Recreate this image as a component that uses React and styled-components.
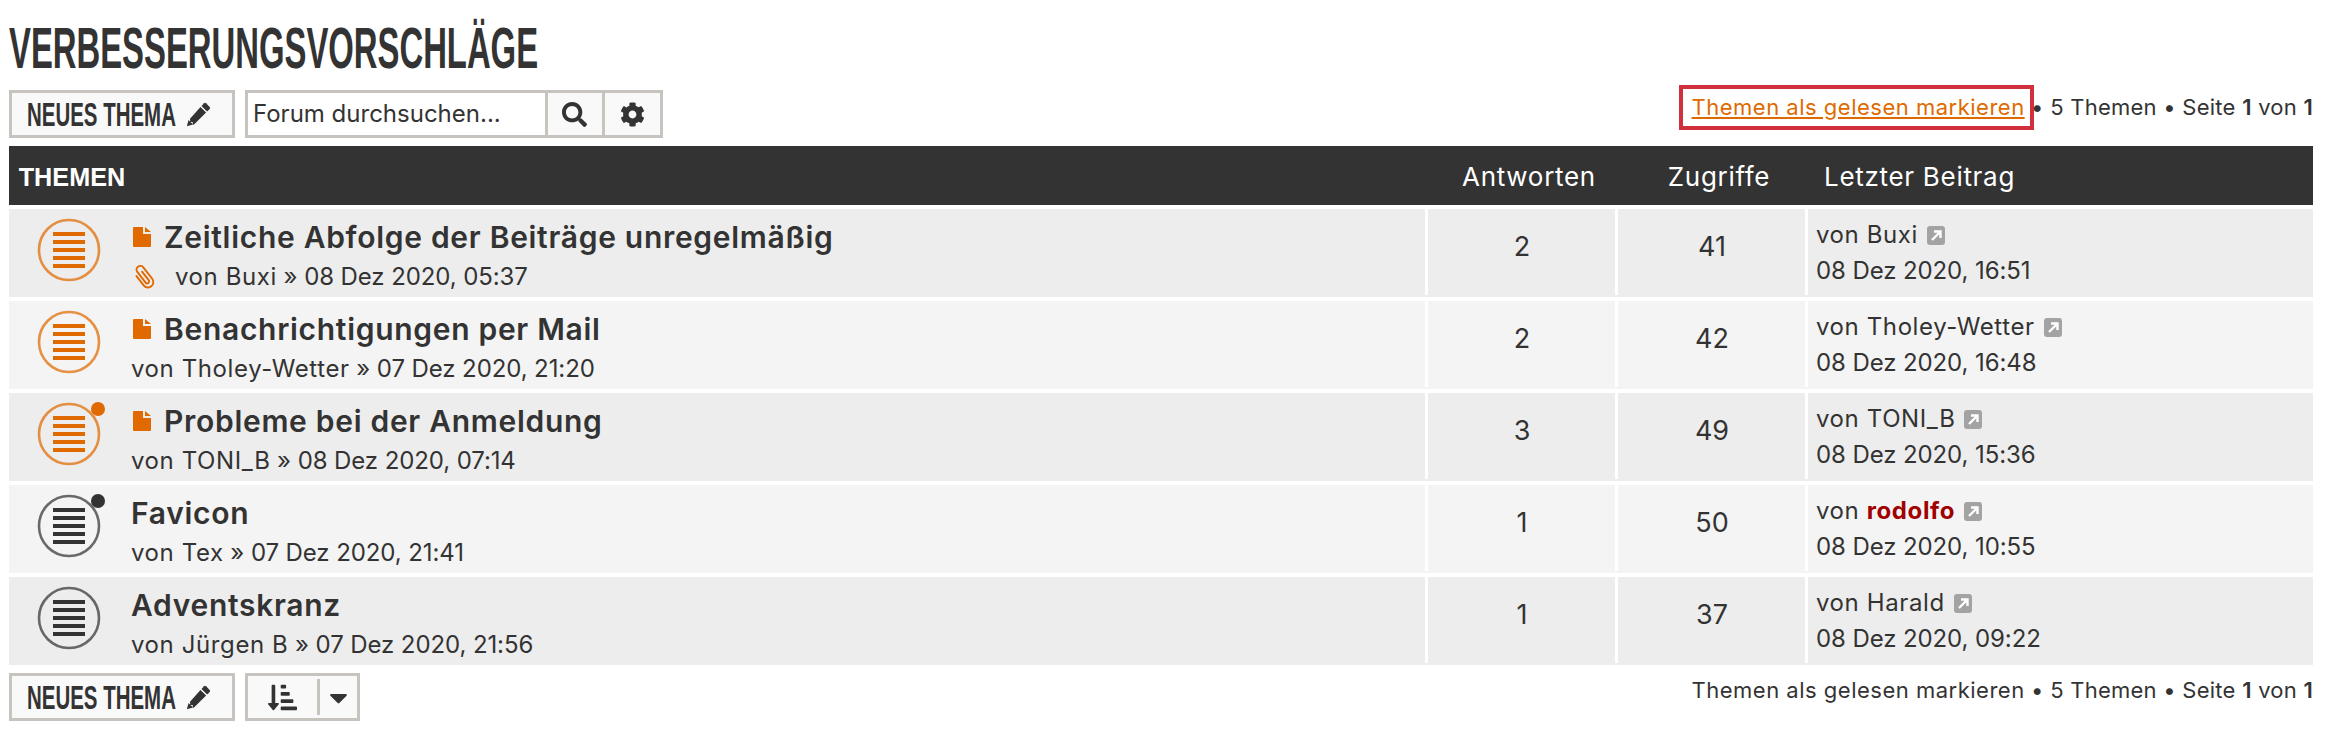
import React from "react";
import styled, { createGlobalStyle } from "styled-components";
import { FaSearch, FaCog, FaSortAmountDownAlt, FaCaretDown } from "react-icons/fa";

const GlobalStyle = createGlobalStyle`
  html, body { margin: 0; padding: 0; background: #fff; }
  body { font-family: Inter, "Open Sans", sans-serif; color: #333; }
`;

const Page = styled.div`
  padding: 0 30px 0 9px;
  height: 733px;
  overflow: hidden;
  box-sizing: border-box;
`;

const Heading = styled.h1`
  margin: 0;
  height: 90px;
  padding-top: 15px;
  box-sizing: border-box;
  font: 700 57px/66px "Liberation Sans", Arial, sans-serif;
  color: #333;
  white-space: nowrap;
  transform: scaleX(0.576);
  transform-origin: left top;
`;

const ActionBar = styled.div`
  display: flex;
  align-items: flex-start;
  justify-content: space-between;
  height: ${(p) => p.$height}px;
`;

const ActionGroup = styled.div`
  display: flex;
  gap: 10px;
`;

const Button = styled.button`
  width: 226px;
  height: 48px;
  box-sizing: border-box;
  border: 3px solid #c7c3be;
  background: #f9f9f9;
  color: #333;
  padding: 0 0 0 15px;
  display: flex;
  align-items: center;
`;

const ButtonLabel = styled.span`
  display: block;
  width: 159px;
  flex: none;
  font: 700 33px/1 "Liberation Sans", Arial, sans-serif;
  white-space: nowrap;
  transform: scaleX(0.62);
  transform-origin: left center;
`;

const SearchBox = styled.div`
  display: flex;
  width: 418px;
  height: 48px;
  box-sizing: border-box;
  border: 3px solid #c7c3be;
`;

const SearchText = styled.div`
  width: 298px;
  padding-left: 5px;
  box-sizing: border-box;
  background: #fff;
  font-size: 24px;
  line-height: 42px;
  color: #333;
`;

const SearchButton = styled.div`
  width: 55px;
  border-left: 3px solid #c7c3be;
  background: #f9f9f9;
  display: flex;
  align-items: center;
  justify-content: center;
  font-size: 25px;
  color: #333;
`;

const SortButton = styled.div`
  width: 115px;
  height: 48px;
  box-sizing: border-box;
  border: 3px solid #c7c3be;
  background: #f9f9f9;
  display: flex;
  align-items: center;
  color: #333;
`;

const SortPart = styled.div`
  display: flex;
  align-items: center;
  justify-content: center;
  height: 36px;
  font-size: 29px;
  width: ${(p) => p.$width}px;
  border-left: ${(p) => (p.$divided ? "3px solid #c7c3be" : "none")};
`;

const Pagination = styled.div`
  position: relative;
  font-size: 22px;
  line-height: 30px;
  letter-spacing: 0.25px;
  white-space: nowrap;
  margin-top: ${(p) => p.$top}px;
  color: #333;
  b { font-weight: 600; }
`;

const MarkLink = styled.a`
  color: #e06a00;
  letter-spacing: 0.5px;
  text-decoration: underline;
`;

const MarkText = styled.span`
  letter-spacing: 0.5px;
`;

// roter rahmen aus dem screenshot, liegt über dem link
const Highlight = styled.span`
  position: absolute;
  left: -13px;
  top: -7px;
  width: 355px;
  height: 45px;
  box-sizing: border-box;
  border: 4px solid #d0303c;
`;

const HeaderBar = styled.div`
  display: grid;
  grid-template-columns: 1417px 190px 190px 1fr;
  height: 59px;
  padding-top: 2px;
  box-sizing: border-box;
  background: #333;
  color: #fff;
  align-items: center;
  font-size: 26px;
  letter-spacing: 0.7px;
  margin-bottom: 4px;
`;

const HeaderTitle = styled.div`
  padding-left: 10px;
  font: 700 26px/1 "Liberation Sans", Arial, sans-serif;
  letter-spacing: 0;
  white-space: nowrap;
  transform: scaleX(0.97);
  transform-origin: left center;
`;

const HeaderCell = styled.div`
  text-align: ${(p) => p.$align || "center"};
  padding-left: ${(p) => p.$pad || 0}px;
  white-space: nowrap;
`;

const Rows = styled.div`
  display: flex;
  flex-direction: column;
  gap: 4px;
  margin-bottom: 8px;
`;

const Row = styled.div`
  display: grid;
  grid-template-columns: 1417px 190px 190px 1fr;
  height: 88px;
  background: ${(p) => (p.$even ? "#f4f4f4" : "#ededed")};
`;

const TopicCell = styled.div`
  display: flex;
  height: 86px;
`;

const StatusWrap = styled.div`
  position: relative;
  width: 122px;
  flex: none;
`;

const StatusSvg = styled.svg`
  position: absolute;
  left: 28px;
  top: 9px;
  width: 64px;
  height: 64px;
  overflow: visible;
`;

const TopicText = styled.div`
  padding-top: 4px;
  min-width: 0;
`;

const TitleLine = styled.div`
  display: flex;
  align-items: center;
  gap: 13px;
  height: 48px;
`;

const PageSvg = styled.svg`
  margin-left: 2px;
`;

const Title = styled.a`
  font-size: 30px;
  font-weight: 600;
  letter-spacing: 0.7px;
  color: #333;
  text-decoration: none;
  white-space: nowrap;
`;

const Meta = styled.div`
  display: flex;
  align-items: center;
  gap: 18px;
  font-size: 24px;
  line-height: 32px;
  white-space: nowrap;
  color: #333;
`;

const Who = styled.span`
  letter-spacing: 0.6px;
`;

const When = styled.span`
  letter-spacing: -0.1px;
`;

const CountCell = styled.div`
  height: 86px;
  padding-bottom: 12px;
  box-sizing: border-box;
  border-left: 3px solid #fff;
  margin-left: -1px;
  display: flex;
  align-items: center;
  justify-content: center;
  font-size: 27px;
`;

const LastCell = styled.div`
  height: 86px;
  border-left: 3px solid #fff;
  margin-left: -1px;
  box-sizing: border-box;
  padding: 8px 0 0 8px;
  font-size: 24px;
  line-height: 36px;
  white-space: nowrap;
`;

const Author = styled.b`
  color: #a00000;
  font-weight: 700;
`;

const LinkSvg = styled.svg`
  margin-left: 9px;
  vertical-align: -2px;
`;

const ClipSvg = styled.svg`
  flex: none;
`;

const StatusIcon = ({ color, dot }) => (
  <StatusSvg viewBox="0 0 64 64">
    <circle cx="32" cy="32" r="30" fill="none" stroke={color} strokeWidth="2.6" opacity="0.72" />
    {[16, 24, 32, 40, 48].map((y) => (
      <rect key={y} x="16" y={y - 2} width="32" height="4" fill={color} />
    ))}
    {dot && <circle cx="61" cy="7" r="7" fill={color} />}
  </StatusSvg>
);

const PageIcon = () => (
  <PageSvg width="18" height="20" viewBox="0 0 18 20">
    <path d="M0 1a1 1 0 0 1 1-1h9v7h8v12a1 1 0 0 1-1 1H1a1 1 0 0 1-1-1z" fill="#e06a00" />
    <path d="M12 0l6 5h-6z" fill="#e06a00" />
  </PageSvg>
);

const ClipIcon = () => (
  <ClipSvg width="26" height="28" viewBox="0 0 24 26">
    <g transform="rotate(-38 12 13)" fill="none" stroke="#e06a00" strokeWidth="1.8" strokeLinecap="round">
      <path d="M7 8v11a5 5 0 0 0 10 0V5.5a3.5 3.5 0 0 0-7 0V18a1.8 1.8 0 0 0 3.6 0V8" />
    </g>
  </ClipSvg>
);

const PencilIcon = () => (
  <svg width="25" height="25" viewBox="0 0 29 29" fill="#333">
    <path d="M21 1.5a1.6 1.6 0 0 1 2.2 0l4.3 4.3a1.6 1.6 0 0 1 0 2.2l-3 3-6.5-6.5z" />
    <path d="M16.8 5.7l6.5 6.5L9 26.5l-1.2-.3v-3h-3v-3l-.4-.4z" />
    <path d="M2.9 20.9l5.2 5.2L1 28z" />
  </svg>
);

const LinkIcon = () => (
  <LinkSvg width="18" height="19" viewBox="0 0 18 19">
    <rect width="18" height="19" rx="3" fill="#a3a3a3" />
    <path d="M5 14l7-7M7 5.5h6.5V12" fill="none" stroke="#fff" strokeWidth="2.4" />
  </LinkSvg>
);

const NewTopic = () => (
  <Button>
    <ButtonLabel>NEUES THEMA</ButtonLabel>
    <PencilIcon />
  </Button>
);

const topics = [
  { title: "Zeitliche Abfolge der Beiträge unregelmäßig", who: "von Buxi", when: " » 08 Dez 2020, 05:37", replies: 2, views: 41, last: "Buxi", date: "08 Dez 2020, 16:51", hot: true, clip: true },
  { title: "Benachrichtigungen per Mail", who: "von Tholey-Wetter", when: " » 07 Dez 2020, 21:20", replies: 2, views: 42, last: "Tholey-Wetter", date: "08 Dez 2020, 16:48", hot: true },
  { title: "Probleme bei der Anmeldung", who: "von TONI_B", when: " » 08 Dez 2020, 07:14", replies: 3, views: 49, last: "TONI_B", date: "08 Dez 2020, 15:36", hot: true, dot: true },
  { title: "Favicon", who: "von Tex", when: " » 07 Dez 2020, 21:41", replies: 1, views: 50, last: "rodolfo", date: "08 Dez 2020, 10:55", dot: true, mod: true },
  { title: "Adventskranz", who: "von Jürgen B", when: " » 07 Dez 2020, 21:56", replies: 1, views: 37, last: "Harald", date: "08 Dez 2020, 09:22" },
];

const App = () => (
  <Page>
    <GlobalStyle />
    <Heading>VERBESSERUNGSVORSCHLÄGE</Heading>
    <ActionBar $height={56}>
      <ActionGroup>
        <NewTopic />
        <SearchBox>
          <SearchText>Forum durchsuchen...</SearchText>
          <SearchButton><FaSearch /></SearchButton>
          <SearchButton><FaCog /></SearchButton>
        </SearchBox>
      </ActionGroup>
      <Pagination $top={2}>
        <MarkLink href="#">Themen als gelesen markieren</MarkLink>
        <Highlight />
        {" • 5 Themen • Seite "}<b>1</b>{" von "}<b>1</b>
      </Pagination>
    </ActionBar>
    <HeaderBar>
      <HeaderTitle>THEMEN</HeaderTitle>
      <HeaderCell $pad={16}>Antworten</HeaderCell>
      <HeaderCell $pad={16}>Zugriffe</HeaderCell>
      <HeaderCell $align="left" $pad={18}>Letzter Beitrag</HeaderCell>
    </HeaderBar>
    <Rows>
      {topics.map((t, i) => (
        <Row key={t.title} $even={i % 2 === 1}>
          <TopicCell>
            <StatusWrap>
              <StatusIcon color={t.hot ? "#e06a00" : "#333"} dot={t.dot} />
            </StatusWrap>
            <TopicText>
              <TitleLine>
                {t.hot && <PageIcon />}
                <Title href="#">{t.title}</Title>
              </TitleLine>
              <Meta>
                {t.clip && <ClipIcon />}
                <span><Who>{t.who}</Who><When>{t.when}</When></span>
              </Meta>
            </TopicText>
          </TopicCell>
          <CountCell>{t.replies}</CountCell>
          <CountCell>{t.views}</CountCell>
          <LastCell>
            <Who>von {t.mod ? <Author>{t.last}</Author> : t.last}</Who><LinkIcon /><br />
            <When>{t.date}</When>
          </LastCell>
        </Row>
      ))}
    </Rows>
    <ActionBar $height={48}>
      <ActionGroup>
        <NewTopic />
        <SortButton>
          <SortPart $width={70}><FaSortAmountDownAlt /></SortPart>
          <SortPart $width={38} $divided><FaCaretDown /></SortPart>
        </SortButton>
      </ActionGroup>
      <Pagination $top={2}>
        <MarkText>Themen als gelesen markieren</MarkText>
        {" • 5 Themen • Seite "}<b>1</b>{" von "}<b>1</b>
      </Pagination>
    </ActionBar>
  </Page>
);

export default App;
